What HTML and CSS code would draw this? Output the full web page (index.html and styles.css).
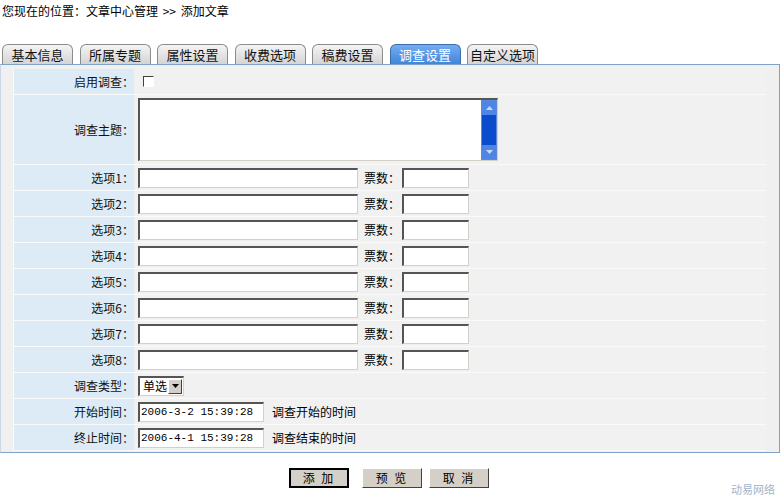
FILE: index.html
```html
<!DOCTYPE html>
<html lang="zh-CN">
<head>
<meta charset="utf-8">
<title>添加文章</title>
<link rel="stylesheet" href="styles.css">
</head>
<body>
<div class="crumb">您现在的位置：文章中心管理 &gt;&gt; 添加文章</div>

<div class="tabs">
  <span class="tab">基本信息</span>
  <span class="tab">所属专题</span>
  <span class="tab">属性设置</span>
  <span class="tab">收费选项</span>
  <span class="tab">稿费设置</span>
  <span class="tab active">调查设置</span>
  <span class="tab">自定义选项</span>
</div>

<div class="panel">
  <div class="form">
    <div class="label">启用调查：</div>
    <div class="value"><span class="check"></span></div>

    <div class="label">调查主题：</div>
    <div class="value">
      <div class="area">
        <div class="scroll">
          <span class="arrow up"><svg width="7" height="4" viewBox="0 0 7 4"><path d="M0 4h7L3.5 0z" fill="#c8dcfa"/></svg></span>
          <span class="arrow down"><svg width="7" height="4" viewBox="0 0 7 4"><path d="M0 0h7L3.5 4z" fill="#c8dcfa"/></svg></span>
        </div>
      </div>
    </div>

    <div class="label">选项1：</div>
    <div class="value"><span class="input opt"></span><span class="votes">票数：</span><span class="input num"></span></div>
    <div class="label">选项2：</div>
    <div class="value"><span class="input opt"></span><span class="votes">票数：</span><span class="input num"></span></div>
    <div class="label">选项3：</div>
    <div class="value"><span class="input opt"></span><span class="votes">票数：</span><span class="input num"></span></div>
    <div class="label">选项4：</div>
    <div class="value"><span class="input opt"></span><span class="votes">票数：</span><span class="input num"></span></div>
    <div class="label">选项5：</div>
    <div class="value"><span class="input opt"></span><span class="votes">票数：</span><span class="input num"></span></div>
    <div class="label">选项6：</div>
    <div class="value"><span class="input opt"></span><span class="votes">票数：</span><span class="input num"></span></div>
    <div class="label">选项7：</div>
    <div class="value"><span class="input opt"></span><span class="votes">票数：</span><span class="input num"></span></div>
    <div class="label">选项8：</div>
    <div class="value"><span class="input opt"></span><span class="votes">票数：</span><span class="input num"></span></div>

    <div class="label">调查类型：</div>
    <div class="value">
      <span class="select">单选<span class="drop"><svg width="7" height="4" viewBox="0 0 7 4"><path d="M0 0h7L3.5 4z" fill="#000"/></svg></span></span>
    </div>

    <div class="label">开始时间：</div>
    <div class="value"><span class="input date">2006-3-2 15:39:28</span><span class="note">调查开始的时间</span></div>

    <div class="label">终止时间：</div>
    <div class="value"><span class="input date">2006-4-1 15:39:28</span><span class="note">调查结束的时间</span></div>
  </div>
</div>

<div class="footer">
  <div class="actions">
    <span class="btn first">添 加</span>
    <span class="btn">预 览</span>
    <span class="btn">取 消</span>
  </div>
  <div class="mark">动易网络</div>
</div>
</body>
</html>
```

FILE: styles.css
```css
* { box-sizing: border-box; }

body {
  margin: 0;
  width: 780px;
  height: 497px;
  overflow: hidden;
  background: #fff;
  font-family: "Noto Sans CJK SC", "Liberation Sans", sans-serif;
  font-size: 12px;
  color: #000;
}

.crumb {
  padding: 3px 0 0 2px;
  height: 44px;
  line-height: 16px;
  word-spacing: 2px;
}

/* tab strip */
.tabs {
  display: flex;
  gap: 6.5px;
  padding-left: 2px;
  height: 20px;
}
.tab {
  width: 71px;
  height: 20px;
  border: 1px solid #8c8c8c;
  border-bottom: none;
  border-radius: 6px 6px 0 0;
  background: linear-gradient(#f4f4f4, #d4d4d4);
  text-align: center;
  line-height: 19px;
  color: #111;
  font-size: 13px;
}
.tab.active {
  background: linear-gradient(#74adf0, #3f86dc);
  border-color: #3a6ea8;
  color: #fff;
}

/* framed panel holding the form */
.panel {
  border: 1px solid #7fa2c8;
  border-left-color: #c8d8e8;
  background: #f0f0f0;
  padding: 4px 13px 0 12px;
  height: 389px;
}

.form {
  display: grid;
  grid-template-columns: 120px 1fr;
  grid-template-rows: 26px 70px repeat(11, 26px);
  border-left: 1px solid #fafafa;
}
.label,
.value {
  border-bottom: 1px solid #fafafa;
  display: flex;
  align-items: center;
}
.label {
  background: #dcebf6;
  justify-content: flex-end;
  padding-right: 0;
  color: #111;
}
.value {
  background: #f1f1f1;
  padding-left: 4px;
}

.check {
  display: inline-block;
  width: 11px;
  height: 11px;
  margin-left: 5px;
  border-top: 1px solid #404040;
  border-left: 1px solid #404040;
  border-right: 1px solid #fff;
  border-bottom: 1px solid #fff;
  background: #fff;
}

/* sunken inputs */
.input,
.area,
.select {
  display: inline-block;
  background: #fff;
  border-top: 2px solid #555;
  border-left: 2px solid #555;
  border-right: 1px solid #d4d0c8;
  border-bottom: 1px solid #d4d0c8;
}
.input { height: 20px; }
.opt { width: 220px; }
.num { width: 67px; }
.votes { margin: 0 2px 0 6px; }
.date {
  width: 126px;
  padding-left: 1px;
  font-family: "Liberation Mono", monospace;
  font-size: 11px;
  line-height: 16px;
}
.note { margin-left: 8px; }

.area {
  position: relative;
  width: 360px;
  height: 63px;
}
.scroll {
  position: absolute;
  right: 0;
  top: 0;
  bottom: 0;
  width: 16px;
  background: #0a4ccc;
  border: 1px solid #5c8ad8;
}
.arrow {
  position: absolute;
  left: 0;
  width: 14px;
  height: 14px;
  background: #4f86e6;
  display: flex;
  align-items: center;
  justify-content: center;
}
.arrow.up { top: 0; }
.arrow.down { bottom: 0; }

.select {
  height: 20px;
  width: 46px;
  padding-left: 3px;
  line-height: 16px;
  position: relative;
}
.drop {
  position: absolute;
  right: 1px;
  top: 1px;
  width: 14px;
  height: 15px;
  background: #d4d0c8;
  border: 1px solid;
  border-color: #fff #404040 #404040 #fff;
  display: flex;
  align-items: center;
  justify-content: center;
}

/* submit row */
.footer {
  position: relative;
  height: 44px;
}
.actions {
  display: flex;
  gap: 13px;
  padding: 15px 0 0 289px;
}
.btn {
  width: 60px;
  height: 20px;
  background: #d4d0c8;
  border: 1px solid;
  border-color: #fff #404040 #404040 #fff;
  text-align: center;
  line-height: 18px;
  letter-spacing: 2px;
}
.btn.first {
  border: 2px solid #000;
  line-height: 16px;
}
.btn:last-child { margin-left: -6px; }

.mark {
  position: absolute;
  right: 5px;
  bottom: 1px;
  color: #9fb4c8;
  font-size: 11px;
  line-height: 14px;
}
```
